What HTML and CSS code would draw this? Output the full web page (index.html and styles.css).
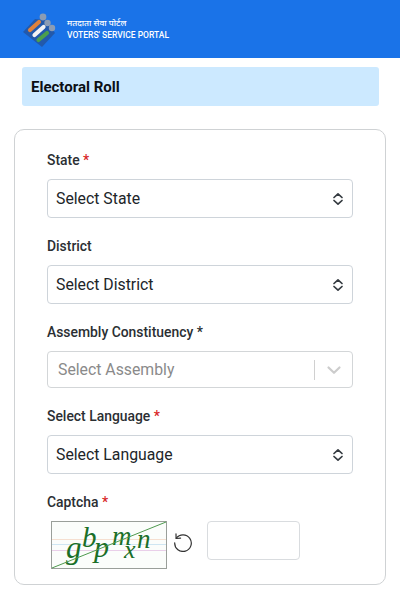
FILE: index.html
```html
<!DOCTYPE html>
<html lang="en">
<head>
<meta charset="utf-8">
<title>Electoral Roll</title>
<link rel="stylesheet" href="styles.css">
</head>
<body>
<header class="topbar">
  <svg class="logo" width="40" height="36" viewBox="0 0 40 36">
    <path d="M2 20 L21 35 L34 21 L24 8 L14 7 Z" fill="#2259ab"/>
    <circle cx="22" cy="5" r="3.400" fill="#8b9cb4"/>
    <circle cx="26.500" cy="11" r="3.200" fill="#8b9cb4"/>
    <circle cx="31" cy="16" r="3.200" fill="#8b9cb4"/>
    <path d="M9 18 L18 10" stroke="#e0823a" stroke-width="4.200" stroke-linecap="round"/>
    <path d="M13.500 23 L22.500 15" stroke="#f3f3f3" stroke-width="4.200" stroke-linecap="round"/>
    <path d="M17.500 28 L26 21" stroke="#4c9f4c" stroke-width="4.200" stroke-linecap="round"/>
  </svg>
  <div class="brand">
    <div class="brand-hi">मतदाता सेवा पोर्टल</div>
    <div class="brand-en">VOTERS' SERVICE PORTAL</div>
  </div>
</header>
<div class="banner">Electoral Roll</div>
<main class="card">
  <div class="field">
    <label class="label">State <span class="req">*</span></label>
    <div class="select"><span>Select State</span>
      <svg class="updown" width="12" height="14" viewBox="0 0 12 14"><path d="M2 5.500 L6 1.800 L10 5.500 M2 8.500 L6 12.200 L10 8.500" fill="none" stroke="#343a40" stroke-width="1.700" stroke-linecap="round" stroke-linejoin="round"/></svg>
    </div>
  </div>
  <div class="field">
    <label class="label">District</label>
    <div class="select"><span>Select District</span>
      <svg class="updown" width="12" height="14" viewBox="0 0 12 14"><path d="M2 5.500 L6 1.800 L10 5.500 M2 8.500 L6 12.200 L10 8.500" fill="none" stroke="#343a40" stroke-width="1.700" stroke-linecap="round" stroke-linejoin="round"/></svg>
    </div>
  </div>
  <div class="field">
    <label class="label">Assembly Constituency *</label>
    <div class="combo"><span class="combo-text">Select Assembly</span>
      <span class="combo-sep"></span>
      <svg class="combo-arrow" width="20" height="20" viewBox="0 0 20 20"><path d="M4.500 7.500 L10 12.800 L15.500 7.500" fill="none" stroke="#cccccc" stroke-width="2.200" stroke-linecap="round" stroke-linejoin="round"/></svg>
    </div>
  </div>
  <div class="field">
    <label class="label">Select Language <span class="req">*</span></label>
    <div class="select"><span>Select Language</span>
      <svg class="updown" width="12" height="14" viewBox="0 0 12 14"><path d="M2 5.500 L6 1.800 L10 5.500 M2 8.500 L6 12.200 L10 8.500" fill="none" stroke="#343a40" stroke-width="1.700" stroke-linecap="round" stroke-linejoin="round"/></svg>
    </div>
  </div>
  <div class="field">
    <label class="label">Captcha <span class="req">*</span></label>
    <div class="captcha-row">
      <svg class="captcha" width="116" height="48" viewBox="0 0 116 48">
        <rect x="0.500" y="0.500" width="115" height="47" fill="#fbfdfb" stroke="#9a9f9a"/>
        <path d="M1 18.500 H115" stroke="#f5dfd0"/>
        <path d="M1 23.500 H115" stroke="#cfe6f2"/>
        <path d="M1 29.500 H115" stroke="#e9cfe9"/>
        <g class="captcha-text">
          <text x="15" y="37" font-size="31">g</text>
          <text x="31" y="26" font-size="29">b</text>
          <text x="43" y="36" font-size="30">p</text>
          <text x="61" y="24" font-size="27">m</text>
          <text x="73" y="37" font-size="26">x</text>
          <text x="86" y="27" font-size="27">n</text>
        </g>
        <path d="M1 47 L115 1" stroke="#4f9a4f"/>
      </svg>
      <svg class="refresh" width="20" height="20" viewBox="0 0 20 20">
        <path d="M3.300 6.200 A8.300 8.300 0 1 1 1.700 10.800" fill="none" stroke="#333" stroke-width="1.200" stroke-linecap="round"/>
        <path d="M3 1.900 L3.100 6.500 L7.600 6.100" fill="none" stroke="#333" stroke-width="1.200" stroke-linecap="round" stroke-linejoin="round"/>
      </svg>
      <div class="captcha-input"></div>
    </div>
  </div>
</main>
</body>
</html>
```
FILE: styles.css
```css
* { box-sizing: border-box; }
html, body { margin: 0; padding: 0; }
body {
  width: 400px;
  height: 607px;
  overflow: hidden;
  background: #fff;
  font-family: Roboto, "Liberation Sans", sans-serif;
  color: #212529;
}
.topbar {
  height: 58px;
  background: #1a73e8;
  display: flex;
  align-items: center;
  padding-left: 21px;
  gap: 6px;
}
.logo { flex: none; margin-top: 1px; }
.brand { color: #fff; margin-top: -1px; }
.brand-hi {
  font-family: "Noto Sans", "Noto Sans CJK SC", sans-serif;
  font-size: 8.500px;
  line-height: 13px;
  font-weight: 500;
}
.brand-en {
  font-size: 8.500px;
  line-height: 13px;
  font-weight: 500;
}
.banner {
  margin: 9px 21px 0 22px;
  height: 39px;
  background: #cce9ff;
  border-radius: 3px;
  padding-left: 9px;
  display: flex;
  align-items: center;
  font-size: 15px;
  font-weight: 700;
  color: #0b0f14;
}
.card {
  margin: 23px 14px 0;
  height: 456px;
  border: 1px solid #cfd2d4;
  border-radius: 10px;
  padding: 20px 32px 0;
}
.field { margin-bottom: 18px; }
.label {
  display: block;
  font-size: 13.900px;
  line-height: 20px;
  font-weight: 500;
  color: #2b2f33;
  margin-bottom: 9px;
}
.req { color: #d81f26; }
.select {
  height: 39px;
  border: 1px solid #ced4da;
  border-radius: 4px;
  padding: 0 8px 0 8px;
  display: flex;
  align-items: center;
  justify-content: space-between;
  font-size: 15.800px;
  color: #212529;
}
.updown { flex: none; }
.combo {
  height: 37px;
  border: 1px solid #d3d6d8;
  border-radius: 4px;
  padding-left: 10px;
  display: flex;
  align-items: center;
  font-size: 15.800px;
  color: #8a8a8a;
}
.combo-text { flex: 1; }
.combo-sep { width: 1px; height: 20px; background: #d0d0d0; }
.combo-arrow { margin: 0 8px 0 9px; flex: none; }
.captcha-row { display: flex; align-items: flex-start; padding-left: 4px; }
.captcha { flex: none; }
.captcha-text { fill: #1a6f28; font-family: "Liberation Serif", serif; font-style: italic; }
.refresh { flex: none; margin: 11px 0 0 6px; }
.captcha-input {
  width: 93px;
  height: 39px;
  margin-left: 14px;
  border: 1px solid #d9dcdf;
  border-radius: 4px;
}
```
